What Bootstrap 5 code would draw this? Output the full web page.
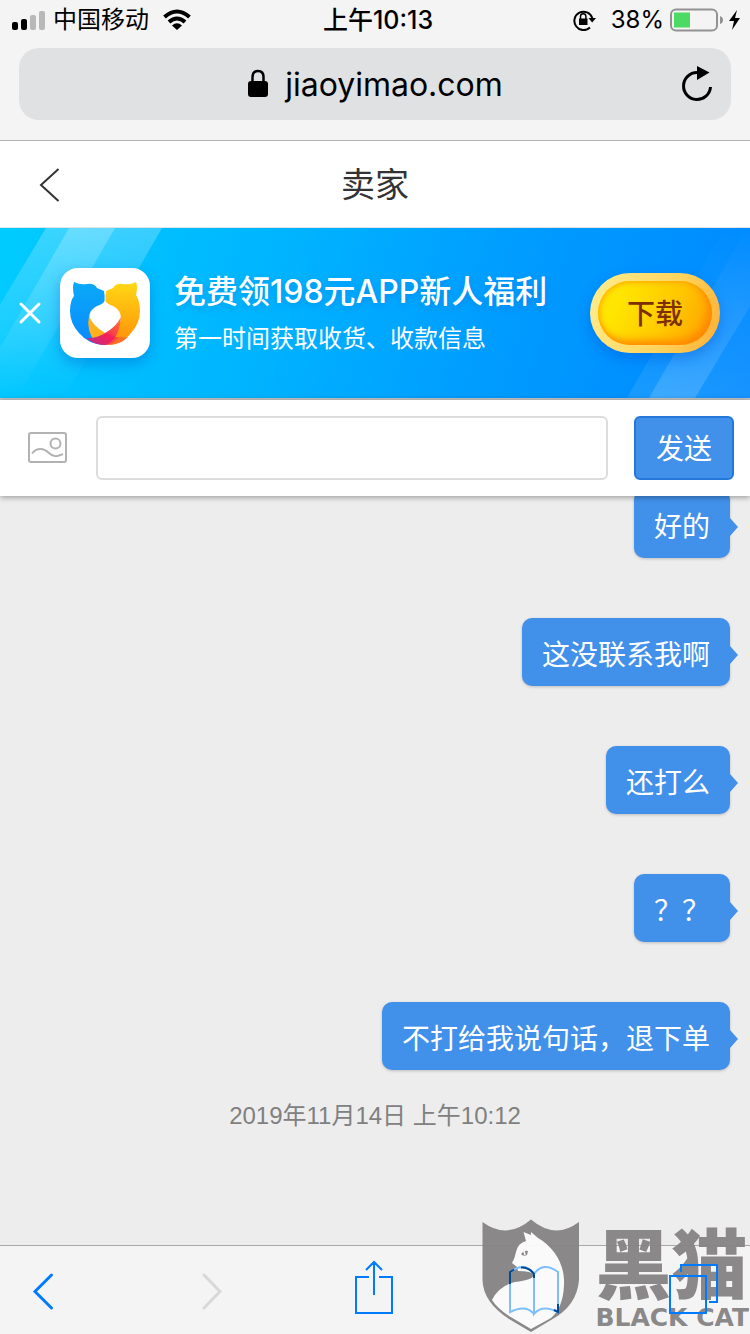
<!DOCTYPE html>
<html lang="zh-CN">
<head>
<meta charset="utf-8">
<meta name="viewport" content="width=device-width, initial-scale=1">
<title>卖家</title>
<link href="https://cdn.jsdelivr.net/npm/bootstrap@5.3.0/dist/css/bootstrap.min.css" rel="stylesheet">
<style>
  body { font-family: "Liberation Sans", "Noto Sans CJK SC", sans-serif; color: #000; background: #ededed; }
  svg { display: block; flex: none; }
  .app-shell { overflow: hidden; }
  .browser-top { background: #f4f4f4; border-bottom: 1px solid #b2b2b2; padding-bottom: 20px; }
  .status-bar { height: 40px; margin-bottom: 8px; padding: 0 9px 0 12px; font: 24px/40px Inter, "Noto Sans CJK SC", sans-serif; }
  .status-time { font-weight: 500; font-size: 25px; padding-left: 6px; }
  .carrier { margin: 0 14px 0 7px; }
  .charge { margin: 0 6px 0 14px; }
  .address-bar { height: 72px; margin: 0 19px; border-radius: 20px; background: #e0e1e3; font: 32px/72px Inter, sans-serif; }
  .address-bar span { padding-top: 2px; }
  .reload-btn { right: 16px; }
  .icon-btn { background: none; border: 0; padding: 0; }
  .page-head { height: 87px; padding-top: 2px; background: #fff; border-bottom: 1px solid #e2e5e8; color: #333; }
  .page-head h1 { font-size: 34px; line-height: 84px; font-weight: 400; }
  .back-link { left: 38px; }
  .promo { height: 172px; padding: 0 30px 0 18px; border-bottom: 2px solid #c8c8c8; color: #fff;
    background: linear-gradient(107deg, #00ccff 0%, #00b4ff 36%, #009cff 66%, #0088ff 100%); }
  .promo-rays { width: 100%; height: 100%; }
  .promo-logo { margin: 0 24px 0 17px; border-radius: 18px; background: #fff; box-shadow: 0 6px 14px rgba(0,90,200,.4); }
  .promo-title { font: 500 32px/46px Inter, "Noto Sans CJK SC", sans-serif; text-shadow: 0 3px 6px rgba(0,90,200,.3); }
  .promo-sub { font-size: 24px; line-height: 36px; padding-top: 6px; }
  .get-btn { width: 130px; height: 80px; border: 0; border-radius: 40px; padding: 8px; color: #7d2f00; font-size: 28px; font-weight: 500;
    background: linear-gradient(110deg, #ffee90, #ffd35c 60%, #ffad33); box-shadow: 0 6px 14px rgba(0,80,210,.4); }
  .get-face { height: 64px; padding-top: 4px; line-height: 60px; border-radius: 32px; background: linear-gradient(115deg, #ffe600 20%, #ffc800 60%, #ffa000);
    box-shadow: inset -4px -4px 10px #ff8400, inset 1px 1px 6px #ffb400; }
  .composer { height: 96px; padding: 0 16px 0 27px; background: #fff; box-shadow: 0 1px 6px rgba(0,0,0,.4); z-index: 1; }
  .message-box { height: 64px; border: 2px solid #dcdcdc; border-radius: 6px; margin: 0 26px 0 28px; font-size: 28px; }
  .send-btn { width: 100px; height: 64px; padding: 4px 0 0; border: 2px solid #2577d8; border-radius: 6px; background: #4190ea; color: #fff; font-size: 28px; line-height: 56px; }
  .chat-log { flex: 1 1 0; min-height: 0; padding: 0 20px 111px; background: #ededed; }
  .chat-list { gap: 60px; }
  .bubble { padding: 15px 20px 13px; border-radius: 10px; background: #4190ea; color: #fff; font: 28px/40px "Noto Sans CJK SC", sans-serif; box-shadow: 0 1px 3px rgba(0,0,0,.2); }
  .bubble::after { content: ""; position: absolute; left: 100%; top: 28px; border: 9px solid transparent; border-left: 8px solid #4190ea; border-right: 0; }
  .stamp { padding-top: 28px; font-size: 24px; line-height: 36px; color: #808080; }
  .browser-nav { height: 89px; padding: 0 32px; background: #f4f4f4; border-top: 1px solid #a8a8a8; }
  .nav-btn { width: 50px; z-index: 3; }
  .stamp-logo { right: 1px; bottom: 0; z-index: 2; pointer-events: none; gap: 14px; color: #878485; opacity: .96; }
  .stamp-cn { font: 900 76px/84px "Noto Sans CJK SC", sans-serif; }
  .stamp-en { font: 700 25px/32px "DejaVu Sans", sans-serif; }
</style>
</head>
<body>
<div class="app-shell vh-100 d-flex flex-column position-relative">
  <header class="browser-top">
    <div class="status-bar d-flex align-items-center justify-content-between position-relative">
      <div class="d-flex align-items-center">
        <svg width="34" height="22" viewBox="0 0 34 22"><rect y="13" width="6" height="8" rx="2"/><rect x="9" y="10" width="6" height="11" rx="2"/><g fill="#b8b8b8"><rect x="18" y="6" width="6" height="15" rx="2"/><rect x="27" y="2" width="6" height="19" rx="2"/></g></svg>
        <span class="carrier">中国移动</span>
        <svg width="28" height="22" viewBox="0 0 28 22"><g fill="none" stroke="#000" stroke-width="4"><path d="M1.500 8Q14-3 26.500 8"/><path d="M6 13Q14 6 22 13"/></g><path d="M9 16.500Q14 12 19 16.500L14 21z"/></svg>
      </div>
      <div class="status-time position-absolute start-50 translate-middle-x text-nowrap">上午10:13</div>
      <div class="d-flex align-items-center">
        <svg width="24" height="22" viewBox="0 0 24 22"><path d="M17 18.500A9.200 9.200 0 1 1 19.300 9" fill="none" stroke="#000" stroke-width="2"/><path d="M15.500 9H23l-3.800 4.600z"/><path d="M6 9.500h8.500V16H6z"/><path d="M7.500 10V7.500a2.700 2.700 0 0 1 5.400 0V10" fill="none" stroke="#000" stroke-width="1.500"/></svg>
        <span class="charge">38%</span>
        <svg width="71" height="24" viewBox="0 0 71 24"><rect x="1" y="1.500" width="46" height="21" rx="5" fill="none" stroke="#929292" stroke-width="2"/><rect x="4" y="4.500" width="16" height="15" fill="#4cd964"/><path d="M50 8q3 1 3 4t-3 4z" fill="#929292"/><path d="M67 2 59 13h5l-2 9 8-12h-5z"/></svg>
      </div>
    </div>
    <div class="address-bar d-flex align-items-center justify-content-center position-relative">
      <svg class="me-3" width="22" height="30" viewBox="0 0 22 30"><path d="M5.500 14V8Q5.500 2 11 2t5.500 6v6" fill="none" stroke="#000" stroke-width="2.500"/><rect x="1" y="12" width="20" height="16" rx="3"/></svg>
      <span>jiaoyimao.com</span>
      <button class="icon-btn reload-btn position-absolute" aria-label="刷新"><svg width="34" height="38" viewBox="0 0 34 38"><path d="M16 7.500A13.500 13.500 0 1 0 29.500 22" fill="none" stroke="#000" stroke-width="3"/><path d="M16 1 28.500 7.500 16 15z"/></svg></button>
    </div>
  </header>

  <div class="page-head position-relative d-flex align-items-center justify-content-center">
    <a href="#" class="back-link position-absolute" aria-label="返回"><svg width="24" height="36" viewBox="0 0 24 36"><path d="M20.500 2 3 18l17.500 16" fill="none" stroke="#333" stroke-width="2"/></svg></a>
    <h1 class="m-0">卖家</h1>
  </div>

  <section class="promo d-flex align-items-center position-relative">
    <svg class="promo-rays position-absolute top-0 start-0" viewBox="0 0 750 170" preserveAspectRatio="none">
      <defs>
        <linearGradient id="rayA" x2="0" y2="1"><stop stop-color="#fff" stop-opacity=".23"/><stop offset="1" stop-color="#fff" stop-opacity="0"/></linearGradient>
        <linearGradient id="rayB" x2="0" y2="1"><stop stop-color="#fff" stop-opacity="0"/><stop offset="1" stop-color="#fff" stop-opacity=".16"/></linearGradient>
      </defs>
      <g fill="url(#rayA)"><path d="M46 0H162L64 170H-56z"/><path d="M69 0h46L17 170H-29z"/></g>
      <g fill="url(#rayB)"><path d="M725 0H850V170H627z" opacity=".6"/><path d="M747 0h50L695 170h-46z"/></g>
    </svg>
    <button class="icon-btn position-relative" aria-label="关闭"><svg width="25" height="24" viewBox="0 0 25 24"><path d="m3 3 18 18M21 3 3 21" stroke="#fff" stroke-width="3" stroke-linecap="round"/></svg></button>
    <svg class="promo-logo position-relative" width="90" height="90" viewBox="0 0 90 90">
      <defs>
        <linearGradient id="catBlue" x2="0" y2="1"><stop stop-color="#0aaaf8"/><stop offset="1" stop-color="#0a88ff"/></linearGradient>
        <linearGradient id="catGold" x2="0" y2="1"><stop stop-color="#ffd914"/><stop offset="1" stop-color="#ff8d08"/></linearGradient>
        <linearGradient id="catRed" x1="1" y1="0" x2="0" y2="1"><stop stop-color="#ff8030"/><stop offset=".55" stop-color="#f52b55"/><stop offset="1" stop-color="#6c4fd0"/></linearGradient>
      </defs>
      <path d="M14 14Q20 17 27 16T37 20L44 23Q45 28 44.500 33Q43 36 37 38Q29 42 29 50Q29 60 45 66L44 77Q28 76 19 65Q10 55 10 43Q10 33 14 28Q12 19 14 14z" fill="url(#catBlue)"/>
      <path d="M76 14Q70 17 63 16T53 20L46 23Q45 28 45.500 33Q47 36 53 38Q61 42 61 50Q61 58 45 66L44 77Q62 77 71 65Q80 55 80 43Q80 33 76 27Q78 19 76 14z" fill="url(#catGold)"/>
      <path d="M29 48Q33 58 45 65L35 74Q26 62 29 48z" fill="#ffb21b"/>
      <path d="M61 49Q56 59 45 65Q36 71 26 70Q34 77 45 77Q59 73 61 49z" fill="url(#catRed)"/>
      <path d="M27 70Q37 72 47 65Q54 70 66 70Q57 77 45 77Q34 77 27 70z" fill="#f01860" opacity=".55"/>
      <path d="M59 69Q65 70 68 69Q60 77 48 77Q56 74 59 69z" fill="#ff7025"/>
    </svg>
    <div class="flex-grow-1 position-relative text-nowrap">
      <div class="promo-title">免费领198元APP新人福利</div>
      <div class="promo-sub">第一时间获取收货、收款信息</div>
    </div>
    <button class="get-btn position-relative"><span class="get-face d-block">下载</span></button>
  </section>

  <form class="composer d-flex align-items-center position-relative">
    <button type="button" class="icon-btn" aria-label="图片"><svg width="41" height="34" viewBox="0 0 41 34" fill="none" stroke="#b2b2b2" stroke-width="2"><rect x="2" y="2" width="37" height="29" rx="2"/><circle cx="28.500" cy="12.500" r="5"/><path d="M5 22.500C10 16 17 17 22 22S31 25 36 23"/></svg></button>
    <input class="form-control message-box" type="text" aria-label="消息">
    <button type="button" class="send-btn flex-shrink-0">发送</button>
  </form>

  <main class="chat-log d-flex flex-column justify-content-end overflow-hidden">
    <ul class="chat-list list-unstyled m-0 d-flex flex-column align-items-end">
      <li class="bubble position-relative">好的</li>
      <li class="bubble position-relative">这没联系我啊</li>
      <li class="bubble position-relative">还打么</li>
      <li class="bubble position-relative">？？</li>
      <li class="bubble position-relative">不打给我说句话，退下单</li>
    </ul>
    <div class="stamp text-center">2019年11月14日 上午10:12</div>
  </main>

  <nav class="browser-nav d-flex align-items-center justify-content-between" aria-label="浏览器">
    <button class="icon-btn nav-btn position-relative" aria-label="后退"><svg width="50" height="60" viewBox="0 0 50 60"><path d="M19.500 15 3 31.500 19.500 48" fill="none" stroke="#007aff" stroke-width="3" stroke-linecap="round"/></svg></button>
    <button class="icon-btn nav-btn position-relative" aria-label="前进"><svg width="50" height="60" viewBox="0 0 50 60"><path d="M13 15 29 31.500 13 48" fill="none" stroke="#d8d8d8" stroke-width="3" stroke-linecap="round"/></svg></button>
    <button class="icon-btn nav-btn position-relative" aria-label="分享"><svg width="50" height="60" viewBox="0 0 50 60" fill="none" stroke="#007aff" stroke-width="2"><path d="M19 17H6v36h36V17H29M24 35V2M16 10l8-8 8 8"/></svg></button>
    <button class="icon-btn nav-btn position-relative" aria-label="书签"><svg width="50" height="60" viewBox="0 0 50 60" fill="none" stroke="#80bfff" stroke-width="2"><path d="M25 54Q17 44 1 52V12Q16 1 25 14Q34 1 49 12V52Q33 44 25 54V14"/><path d="M1 24V12L5 9.500M12 7.500Q20 7 25 14V18M49 44v8l-4-2" stroke="#004a94"/></svg></button>
    <button class="icon-btn nav-btn position-relative" aria-label="标签页"><svg width="50" height="60" viewBox="0 0 50 60" fill="none" stroke="#007aff" stroke-width="2"><path d="M2 16h36v37H2zM13 12V5h36v37h-8"/></svg></button>
  </nav>

  <div class="stamp-logo position-absolute d-flex align-items-end">
    <svg width="100" height="116" viewBox="0 0 100 116"><path d="M1.500 4Q26 22 50 1.500Q74 22 98 4V62Q96 88 70 102L50 114L28 101Q2 84 1.500 62z" fill="#878485"/><path d="M42.500 14L50 17V14L57 20C74 30 84 47 83 67Q82 90 70 100L50 111L28 98Q16 90 11 82Q18 68 34 64Q52 62 53 57Q51 53 37 53L36 49L31 45Q34 40 35 34Q37 25 45 23z" fill="#fbfbfb"/><path d="M40 36q3-4 7-3l-1 4q-4 2-6-1z" fill="#878485"/><path d="M43 33l1 4" stroke="#fff" stroke-width="1.500"/></svg>
    <div class="text-nowrap">
      <div class="stamp-cn">黑猫</div>
      <div class="stamp-en">BLACK CAT</div>
    </div>
  </div>
</div>
<script src="https://cdn.jsdelivr.net/npm/bootstrap@5.3.0/dist/js/bootstrap.bundle.min.js"></script>
</body>
</html>
